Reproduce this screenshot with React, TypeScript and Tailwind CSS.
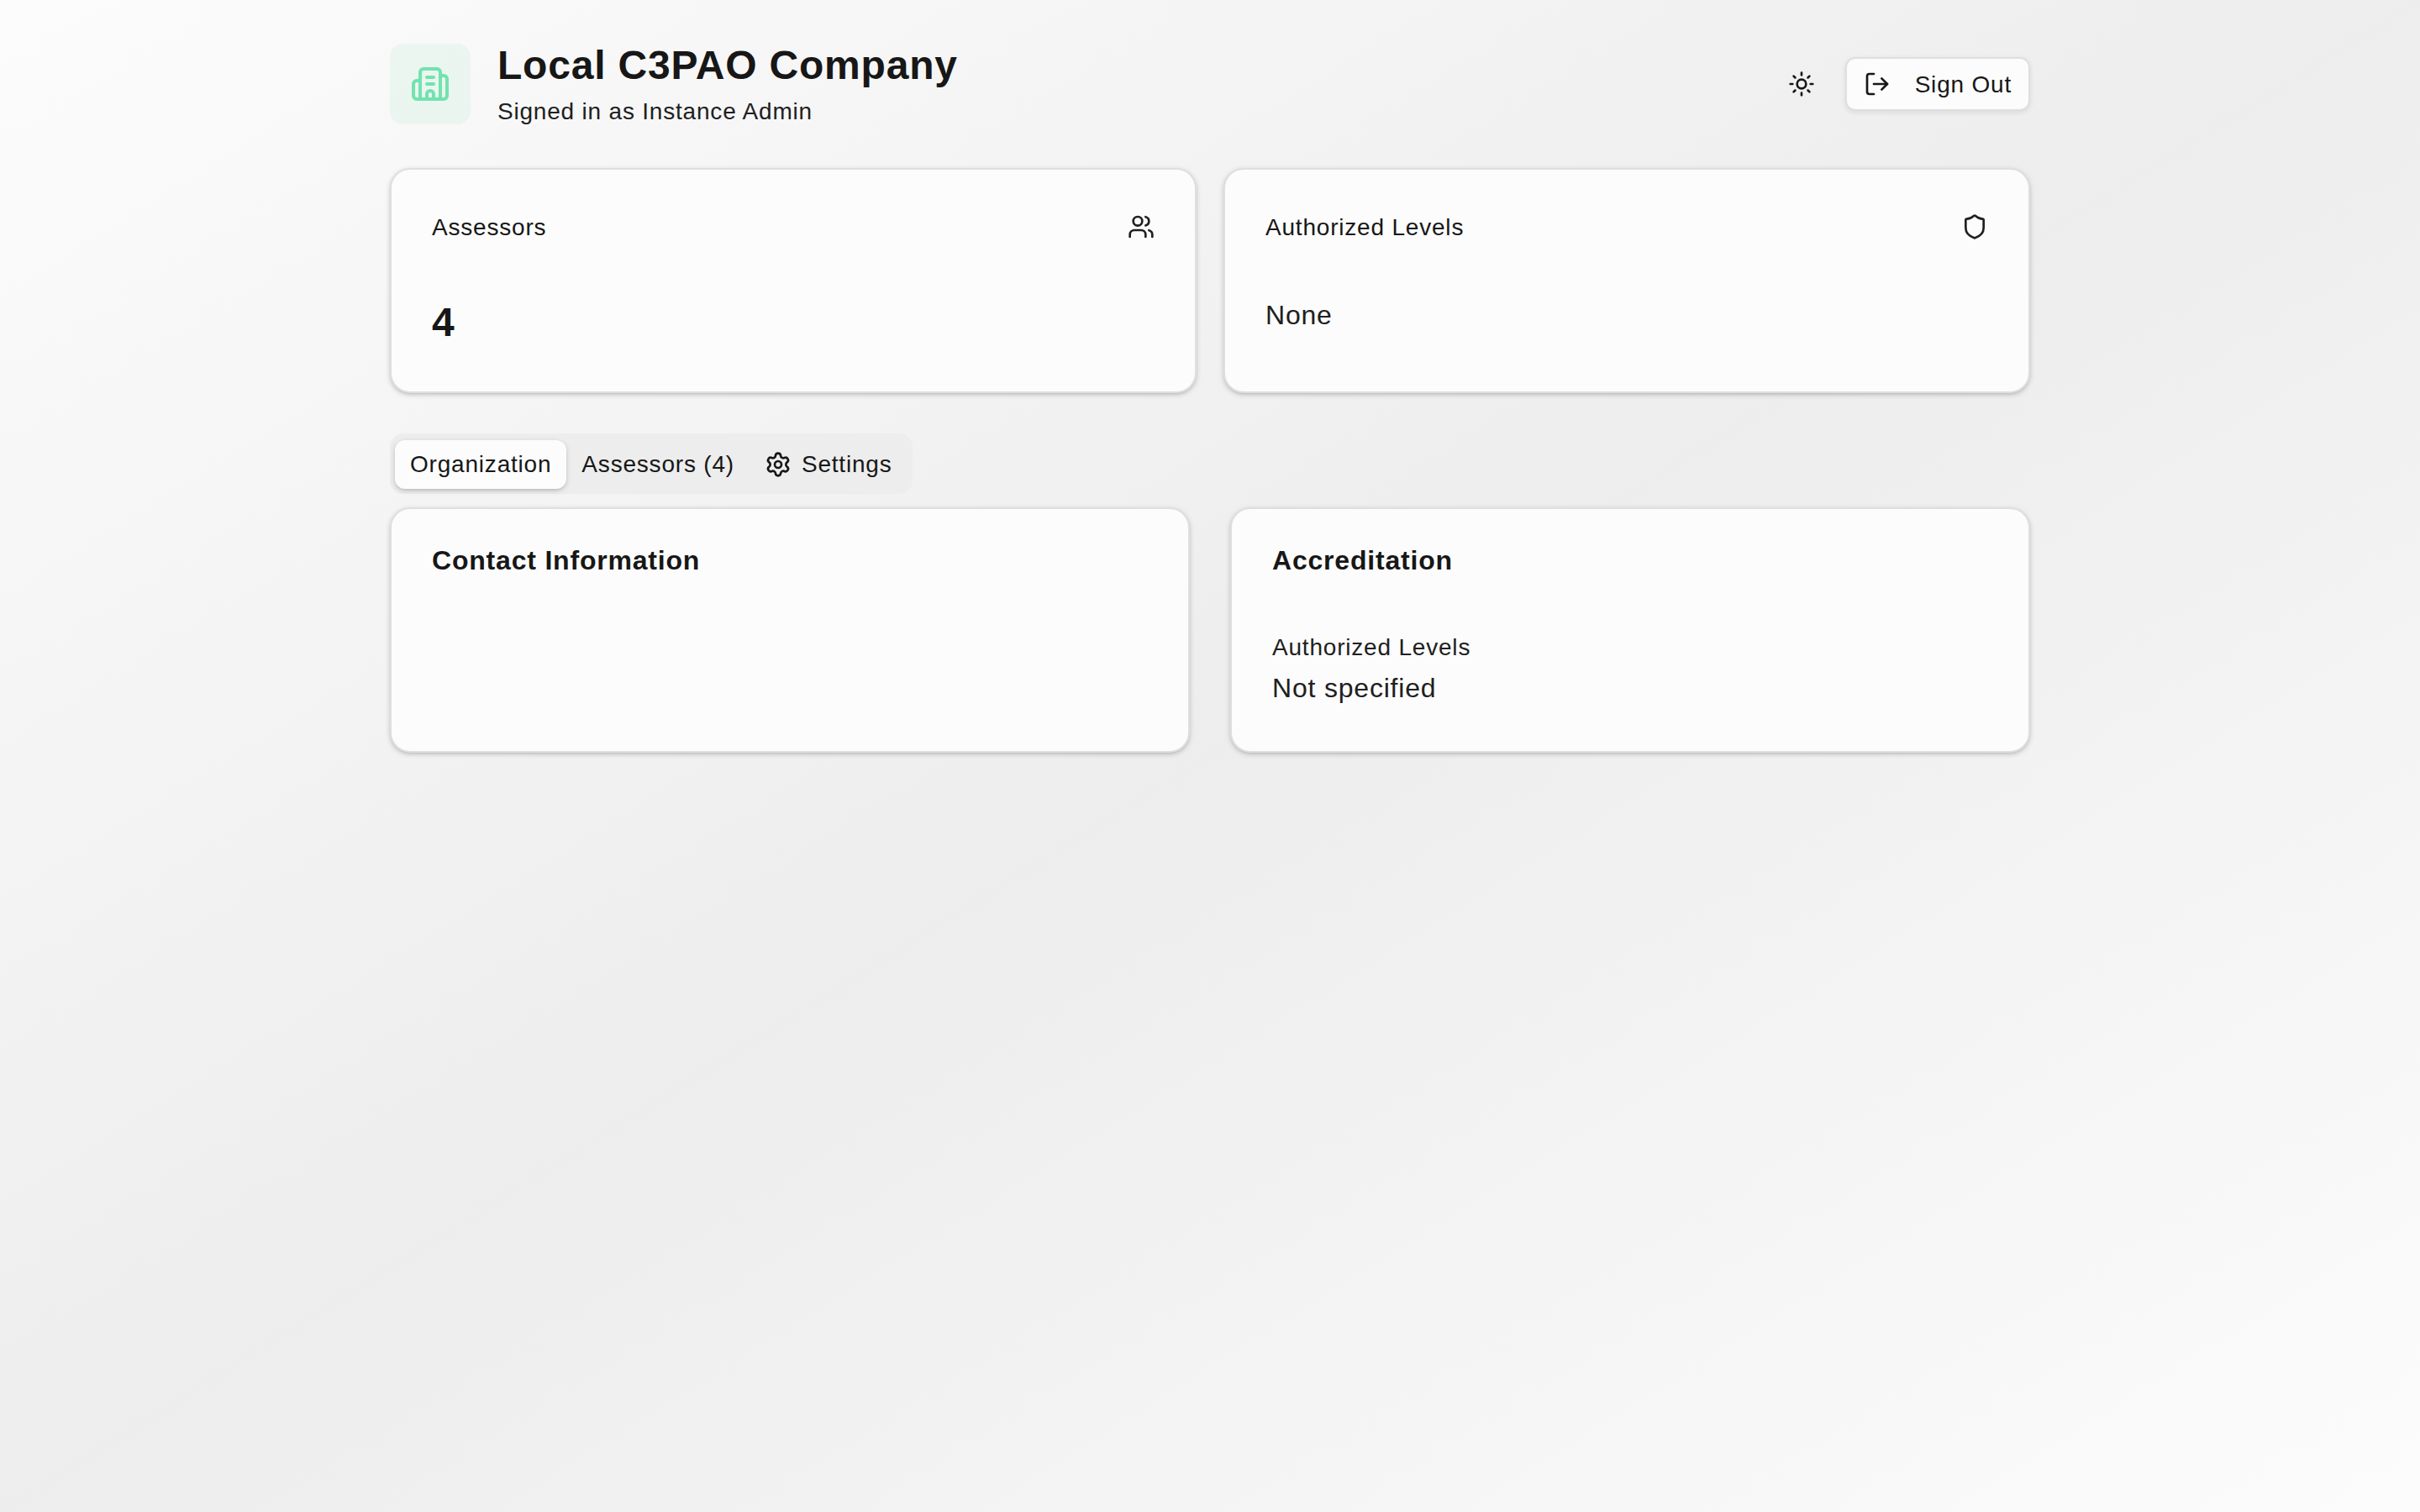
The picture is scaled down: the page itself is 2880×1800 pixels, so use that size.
import React, { useState } from 'react';
import { Building2, LogOut, Settings, Shield, Sun, Users } from 'lucide-react';
import { clsx } from 'clsx';

interface CardProps {
  className?: string;
  children: React.ReactNode;
}

const Card: React.FC<CardProps> = ({ className, children }) => (
  <div
    className={clsx(
      'rounded-[24px] border-2 border-[#dfdfdf] bg-[#fcfcfc] p-12 shadow-[0_2px_6px_0_rgb(0_0_0/0.17),0_2px_4px_-2px_rgb(0_0_0/0.17)]',
      className
    )}
  >
    {children}
  </div>
);

interface StatCardProps {
  title: string;
  icon: React.ReactNode;
  children: React.ReactNode;
}

const StatCard: React.FC<StatCardProps> = ({ title, icon, children }) => (
  <Card className="h-[268px]">
    <div className="flex h-10 items-center justify-between">
      <h3 className="pt-0.5 text-[28px] leading-10">{title}</h3>
      {icon}
    </div>
    <div className="mt-[60px]">{children}</div>
  </Card>
);

const App: React.FC = () => {
  const [activeTab, setActiveTab] = useState('organization');

  // Mock organization data
  const organization = {
    name: 'Local C3PAO Company',
    assessors: 4,
    levels: [] as string[],
  };

  const tabs = [
    { id: 'organization', label: 'Organization' },
    { id: 'assessors', label: `Assessors (${organization.assessors})` },
    { id: 'settings', label: 'Settings', icon: <Settings className="size-8" /> },
  ];

  return (
    <div className="min-h-screen bg-[linear-gradient(to_bottom_right,#fcfcfc,#ededed,#fcfcfc)] font-['Liberation_Sans',sans-serif] tracking-[0.8px] text-[#171717]">
      <div className="mx-auto max-w-[2048px] p-12">
        <header className="flex h-[104px] items-center justify-between">
          <div className="flex items-center gap-8">
            <div className="flex size-24 items-center justify-center rounded-2xl bg-[#72e3ad]/10">
              <Building2 className="size-12 text-[#72e3ad]" />
            </div>
            <div>
              <h1 className="text-5xl leading-[60px] font-bold">{organization.name}</h1>
              <p className="mt-[5px] -mb-px text-[28px] leading-10 text-[#202020]">Signed in as Instance Admin</p>
            </div>
          </div>

          <div className="flex items-center gap-4">
            <button type="button" aria-label="Toggle theme" className="flex size-18 items-center justify-center rounded-xl">
              <Sun className="size-8" />
            </button>
            <button
              type="button"
              className="flex h-16 items-center gap-[29px] rounded-xl border-2 border-[#dfdfdf] bg-[#fcfcfc] px-5 text-[28px] tracking-[0.8px] shadow-[0_2px_6px_0_rgb(0_0_0/0.09)]"
            >
              <LogOut className="size-8" />
              <span className="pt-0.5 leading-10">Sign Out</span>
            </button>
          </div>
        </header>

        <section className="mt-12 grid grid-cols-2 gap-8">
          <StatCard title="Assessors" icon={<Users className="size-8 text-[#202020]" />}>
            <div className="text-5xl leading-[68px] font-bold">{organization.assessors}</div>
          </StatCard>
          <StatCard title="Authorized Levels" icon={<Shield className="size-8 text-[#202020]" />}>
            <div className="text-[32px] leading-[50px] text-[#202020]">
              {organization.levels.length ? organization.levels.join(', ') : 'None'}
            </div>
          </StatCard>
        </section>

        <div role="tablist" className="mt-12 flex h-18 w-fit items-center rounded-2xl bg-[#ededed] pt-2 pr-[7px] pb-1.5 pl-1.5">
          {tabs.map(tab => (
            <button
              key={tab.id}
              type="button"
              role="tab"
              onClick={() => setActiveTab(tab.id)}
              className={clsx(
                'flex h-[58px] items-center gap-3 rounded-xl border-2 border-transparent px-4 text-[28px] leading-10 tracking-[0.8px] whitespace-nowrap',
                activeTab === tab.id &&
                  'bg-[#fcfcfc] shadow-[0_2px_6px_0_rgb(0_0_0/0.17),0_2px_4px_-2px_rgb(0_0_0/0.17)]'
              )}
            >
              {tab.icon}
              {tab.label}
            </button>
          ))}
        </div>

        <section className="mt-4 grid grid-cols-2 gap-12">
          <Card className="h-[292px]">
            <h2 className="-mt-[7px] text-[32px] leading-10 font-bold">Contact Information</h2>
          </Card>
          <Card className="h-[292px]">
            <h2 className="-mt-[7px] text-[32px] leading-10 font-bold">Accreditation</h2>
            <div className="mt-16 text-[#202020]">
              <p className="text-[28px] leading-10">Authorized Levels</p>
              <p className="mt-1 text-[32px] leading-12">Not specified</p>
            </div>
          </Card>
        </section>
      </div>
    </div>
  );
};

export default App;
